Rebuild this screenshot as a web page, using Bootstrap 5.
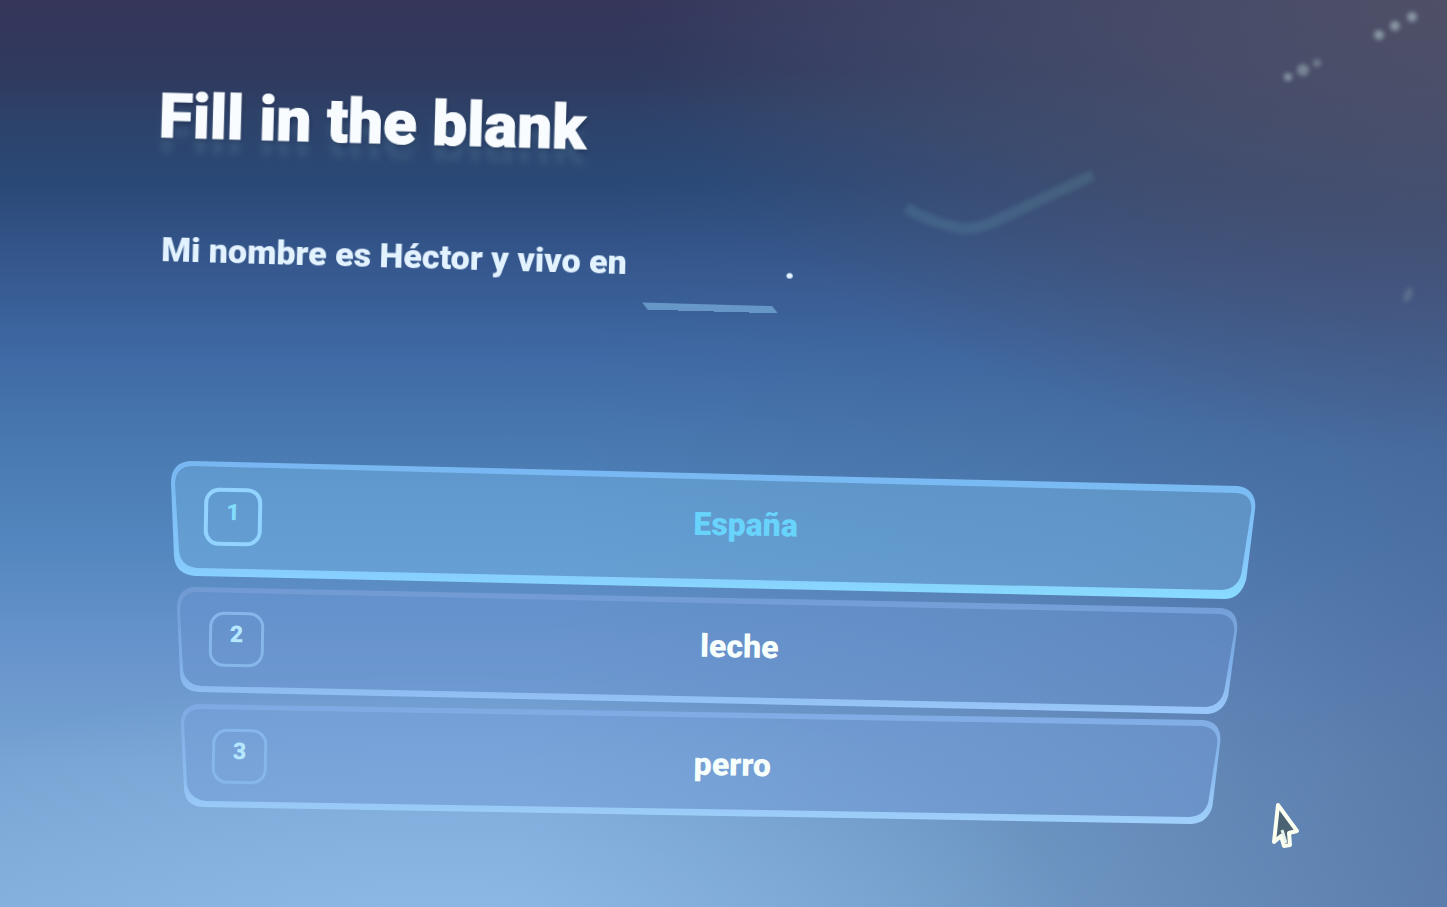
<!DOCTYPE html>
<html lang="en">
<head>
<meta charset="utf-8">
<meta name="viewport" content="width=device-width, initial-scale=1">
<title>Fill in the blank</title>
<link href="https://cdn.jsdelivr.net/npm/bootstrap@5.3.0/dist/css/bootstrap.min.css" rel="stylesheet">
<style>
  body {
    font-family: Roboto, "Open Sans", sans-serif;
    color: #f8fcff;
    background:
      radial-gradient(ellipse 55% 50% at 100% 0, rgba(80,80,102,.95), rgba(72,76,104,.65) 50%, rgba(68,78,112,0)),
      radial-gradient(ellipse 45% 30% at 30% 104%, rgba(150,194,240,.6), rgba(150,194,240,0)),
      linear-gradient(97deg, rgba(66,96,140,0) 40%, rgba(66,96,140,.25) 70%, rgba(68,94,142,.6) 100%),
      linear-gradient(180deg, #35365a 0%, #30395e 8%, #2d4269 13%, #2a4876 20%, #35578d 29%, #3f69a4 39%, #4979b1 49%, #5487bf 60%, #6894cc 72%, #76a3d2 84%, #80acda 100%);
  }
  .lesson { padding: 80px 13% 80px 11%; }
  .tilted { transform: rotate(1.6deg); transform-origin: 0 50%; }
  .lesson-title {
    font-size: 62px; line-height: 72px; font-weight: 900; white-space: nowrap;
    -webkit-text-stroke: 1px #f8fcff;
    text-shadow: 0 16px 7px rgba(110,160,180,.16), 1px 2px 4px rgba(20,30,60,.5);
  }
  .sentence { margin-top: 73px; padding-left: 2px; font-size: 34px; line-height: 48px; font-weight: 900; white-space: nowrap; color: #e2f2ff; }
  .slot { width: 130px; height: 71px; border-bottom: 7px solid #6797c6; transform: skewX(40deg); transform-origin: 0 100%; margin-left: 22px; margin-right: 6px; }
  .options { margin-top: 165px; }
  .option { height: 120px; border: 0; background: none; color: #f6fffb; font-size: 32px; line-height: 40px; font-weight: 900; }
  .option-1 { height: 126px; width: 98.6%; margin-left: 1.1%; color: #68d3fb; }
  .option-2 { height: 117px; width: 96.5%; margin-left: 1.6%; }
  .option-3 { width: 94.6%; margin-left: 2%; }
  .panel { overflow: visible; }
  .keycap {
    left: 3%; top: 25px; width: 55px; height: 55px;
    border: 3px solid #86b6ea; border-radius: 15px;
    font-size: 23px; line-height: 40px; color: #b5e7ff; transform: rotate(1deg);
  }
  .option-1 .keycap { top: 27px; width: 58px; height: 58px; border: 4px solid #92d3ff; color: #83ddfa; line-height: 42px; }
  .option-label { transform: rotate(1deg); padding-left: 6%; }
</style>
</head>
<body class="min-vh-100 position-relative overflow-x-hidden">
<svg class="position-absolute top-0 end-0" width="567" height="320" viewBox="880 0 567 320" aria-hidden="true">
  <defs><filter id="soft"><feGaussianBlur stdDeviation="2"/></filter></defs>
  <g filter="url(#soft)">
    <path d="M906 208Q930 222 955 227Q975 232 1000 219L1093 175" fill="none" stroke="#5f93a6" stroke-opacity=".27" stroke-width="11" stroke-linejoin="round"/>
    <g fill="#a0b3bc" fill-opacity=".7">
      <circle cx="1379" cy="35" r="5"/><circle cx="1395" cy="26" r="5"/><circle cx="1412" cy="17" r="5"/>
      <circle cx="1288" cy="77" r="4"/><circle cx="1303" cy="70" r="6" fill-opacity=".55"/><circle cx="1317" cy="63" r="4" fill-opacity=".45"/>
      <ellipse cx="1408" cy="295" rx="4" ry="8" fill-opacity=".25" transform="rotate(25 1408 295)"/>
    </g>
  </g>
</svg>

<main class="lesson">
  <h1 class="lesson-title tilted mb-0">Fill in the blank</h1>
  <div class="sentence tilted d-flex align-items-start">
    <span>Mi nombre es Héctor y vivo en</span>
    <span class="slot flex-shrink-0" role="img" aria-label="blank"></span>
    <span>.</span>
  </div>

  <div class="options d-flex flex-column align-items-start">
    <button type="button" class="option option-1 position-relative p-0">
      <svg class="panel position-absolute top-0 start-0 w-100 h-100" viewBox="0 0 1084 126" preserveAspectRatio="none" aria-hidden="true">
        <path d="M20 2L1066 27Q1083 28 1082 46L1074 117Q1070 135 1054 136L24 113Q5 111 4 93L1 22Q1 2 20 2Z" fill="#76b5e5" fill-opacity=".48"/>
        <path fill-rule="evenodd" fill="url(#rimA)" d="M20 0L1066 25Q1084 27 1084 46L1075 118Q1070 137 1054 138L24 115Q4 113 3 95L0 22Q0 1 20 0ZM22 5Q5 5 4 22L8 90Q10 106 27 107L1050 129Q1066 128 1070 113L1080 49Q1081 33 1065 32Z"/>
        <defs><linearGradient id="rimA" x2="0" y2="1"><stop stop-color="#77b6f1"/><stop offset=".75" stop-color="#86c9fc"/><stop offset="1" stop-color="#89dcff"/></linearGradient></defs>
      </svg>
      <span class="keycap position-absolute text-center">1</span>
      <span class="option-label d-block">España</span>
    </button>
    <button type="button" class="option option-2 position-relative p-0">
      <svg class="panel position-absolute top-0 start-0 w-100 h-100" viewBox="0 0 1061 117" preserveAspectRatio="none" aria-hidden="true">
        <path d="M18 2L1044 23Q1060 25 1059 42L1050 109Q1045 125 1030 126L22 104Q5 103 4 87L1 22Q1 3 18 2Z" fill="#6d97d3" fill-opacity=".45"/>
        <path fill-rule="evenodd" fill="url(#rimB)" d="M18 0L1044 21Q1061 23 1060 42L1051 109Q1046 126 1030 127L22 105Q4 104 3 87L0 22Q0 1 18 0ZM20 5Q4 5 3 22L6 83Q9 98 25 99L1028 120Q1043 119 1047 104L1057 45Q1058 29 1043 27Z"/>
        <defs><linearGradient id="rimB" x2="0" y2="1"><stop stop-color="#7199d2"/><stop offset=".6" stop-color="#7fafe8"/><stop offset="1" stop-color="#9bc8fa"/></linearGradient></defs>
      </svg>
      <span class="keycap position-absolute text-center">2</span>
      <span class="option-label d-block">leche</span>
    </button>
    <button type="button" class="option option-3 position-relative p-0">
      <svg class="panel position-absolute top-0 start-0 w-100 h-100" viewBox="0 0 1040 120" preserveAspectRatio="none" aria-hidden="true">
        <path d="M18 2L1022 18Q1039 20 1038 37L1030 103Q1025 118 1010 119L22 102Q5 101 4 85L1 20Q1 3 18 2Z" fill="#769fdc" fill-opacity=".48"/>
        <path fill-rule="evenodd" fill="url(#rimC)" d="M18 0L1022 16Q1040 18 1039 37L1031 103Q1026 119 1010 120L22 103Q4 102 3 85L0 20Q0 1 18 0ZM20 5Q4 5 3 20L6 81Q9 95 25 97L1008 113Q1023 112 1027 98L1036 40Q1037 24 1021 22Z"/>
        <defs><linearGradient id="rimC" x2="0" y2="1"><stop stop-color="#7fa8e2"/><stop offset=".6" stop-color="#8bbcf0"/><stop offset="1" stop-color="#a0d1fb"/></linearGradient></defs>
      </svg>
      <span class="keycap position-absolute text-center">3</span>
      <span class="option-label d-block">perro</span>
    </button>
  </div>
</main>

<svg class="position-absolute bottom-0 end-0" width="188" height="106" viewBox="1259 801 188 106" aria-hidden="true">
  <path d="M1278 805L1297 831L1289 833L1290 845L1284 846L1281 836L1274 842Z" fill="#4b6272" stroke="#fbfff0" stroke-width="4" stroke-linejoin="round"/>
  <path d="M1282 830L1286 843" stroke="#e7f1ec" stroke-width="3"/>
</svg>
<script src="https://cdn.jsdelivr.net/npm/bootstrap@5.3.0/dist/js/bootstrap.bundle.min.js"></script>
</body>
</html>
